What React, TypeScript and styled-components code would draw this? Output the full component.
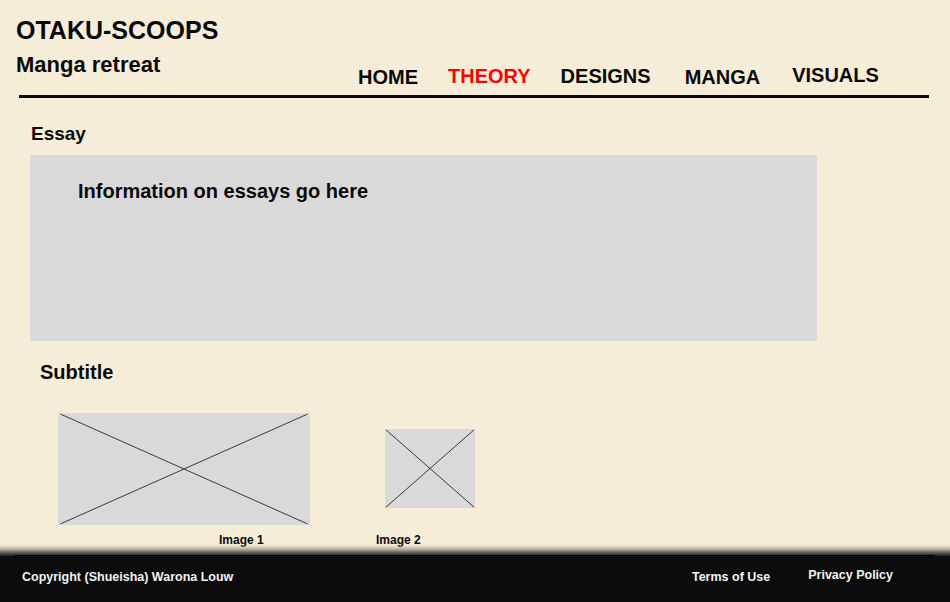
import React from "react";
import styled, { createGlobalStyle } from "styled-components";

const GlobalStyle = createGlobalStyle`
    html, body {
        margin: 0;
        padding: 0;
        background: #f5edd8;
    }
    * {
        box-sizing: border-box;
    }
`;

const Page = styled.div`
    width: 950px;
    height: 602px;
    overflow: hidden;
    display: flex;
    flex-direction: column;
    background-color: #f5edd8;
    font-family: "Liberation Sans", Arial, sans-serif;
    color: #0a0a0a;
`;

const Header = styled.header`
    flex-shrink: 0;
    display: flex;
    padding: 16px 0 0 16px;
`;

const Brand = styled.div`
    flex: 0 0 342px;
    display: flex;
    flex-direction: column;
    gap: 8px;
`;

const SiteTitle = styled.h1`
    margin: 0;
    font-size: 25px;
    line-height: 28px;
    font-weight: 700;
`;

const Tagline = styled.h2`
    margin: 0;
    font-size: 22px;
    line-height: 26px;
    font-weight: 700;
`;

const Nav = styled.nav`
    display: flex;
    gap: 30px;
    margin-top: 49px;
    height: 24px;
`;

const NavLink = styled.a<{ $active?: boolean; $extra?: number; $lift?: number }>`
    font-size: 20px;
    line-height: 24px;
    font-weight: 700;
    text-decoration: none;
    color: ${p => (p.$active ? "#ff0000" : "#0a0a0a")};
    margin-left: ${p => p.$extra || 0}px;
    margin-top: ${p => -(p.$lift || 0)}px;
`;

const Rule = styled.hr`
    flex-shrink: 0;
    border: none;
    height: 3px;
    margin: 6px 21px 0 19px;
    background-color: #0a0a0a;
`;

const Main = styled.main`
    flex: 1;
    min-height: 0;
    display: flex;
    flex-direction: column;
    padding: 25px 0 0 30px;
`;

const SectionTitle = styled.h3<{ $size: number; $indent: number }>`
    margin: 0 0 0 ${p => p.$indent}px;
    font-size: ${p => p.$size}px;
    line-height: 22px;
    font-weight: 700;
`;

const EssayBox = styled.div`
    flex-shrink: 0;
    width: 787px;
    height: 186px;
    margin-top: 10px;
    padding: 24px 0 0 48px;
    background-color: #d9d9d9;
    font-size: 20px;
    line-height: 24px;
    font-weight: 700;
`;

const SubtitleRow = styled.div`
    flex-shrink: 0;
    margin-top: 20px;
`;

const Gallery = styled.div`
    flex-shrink: 0;
    display: flex;
    align-items: flex-start;
    gap: 75px;
    margin: 30px 0 0 28px;
`;

const Figure = styled.figure<{ $offset: number }>`
    margin: ${p => p.$offset}px 0 0 0;
    display: flex;
    flex-direction: column;
`;

const Placeholder = styled.div<{ $w: number; $h: number }>`
    width: ${p => p.$w}px;
    height: ${p => p.$h}px;
    background-color: #d9d9d9;

    svg {
        display: block;
        width: 100%;
        height: 100%;
    }
`;

const Caption = styled.figcaption<{ $dx: number; $dy: number }>`
    margin: ${p => p.$dy}px 0 0 ${p => p.$dx}px;
    font-size: 12px;
    line-height: 14px;
    font-weight: 700;
    white-space: nowrap;
`;

const Footer = styled.footer`
    flex-shrink: 0;
    display: flex;
    flex-direction: column;
    background: linear-gradient(to bottom, rgba(245, 237, 216, 0) 0px, #b9b3a3 4px, #5a5750 8px, #1e1e1e 11px, #0c0c0c 12px);
    padding-top: 10px;
`;

const FooterEdge = styled.div`
    height: 1px;
    margin: 0 15px;
    background-color: #000;
`;

const FooterBar = styled.div`
    height: 46px;
    display: flex;
    align-items: center;
    padding: 0 57px 4px 22px;
    background-color: #0c0c0c;
    color: #f2f2f2;
    font-size: 12.5px;
    font-weight: 700;
`;

const Copyright = styled.span`
    flex: 1;
`;

const FooterLinks = styled.div`
    display: flex;
    gap: 38px;
`;

const FooterLink = styled.a<{ $lift?: number }>`
    color: #f2f2f2;
    text-decoration: none;
    margin-top: ${p => -(p.$lift || 0)}px;
`;

const Cross = () => (
    <svg viewBox="0 0 100 100" preserveAspectRatio="none">
        <line x1="1" y1="1" x2="99" y2="99" stroke="#3a3a3a" strokeWidth="1" vectorEffect="non-scaling-stroke" />
        <line x1="99" y1="1" x2="1" y2="99" stroke="#3a3a3a" strokeWidth="1" vectorEffect="non-scaling-stroke" />
    </svg>
);

export default function App() {
    return (
        <Page>
            <GlobalStyle />
            <Header>
                <Brand>
                    <SiteTitle>OTAKU-SCOOPS</SiteTitle>
                    <Tagline>Manga retreat</Tagline>
                </Brand>
                <Nav>
                    <NavLink href="#">HOME</NavLink>
                    <NavLink href="#" $active $lift={1}>THEORY</NavLink>
                    <NavLink href="#" $lift={1}>DESIGNS</NavLink>
                    <NavLink href="#" $extra={4}>MANGA</NavLink>
                    <NavLink href="#" $extra={2} $lift={2}>VISUALS</NavLink>
                </Nav>
            </Header>
            <Rule />
            <Main>
                <SectionTitle $size={19} $indent={1}>Essay</SectionTitle>
                <EssayBox>Information on essays go here</EssayBox>
                <SubtitleRow>
                    <SectionTitle $size={20} $indent={10}>Subtitle</SectionTitle>
                </SubtitleRow>
                <Gallery>
                    <Figure $offset={0}>
                        <Placeholder $w={252} $h={112}><Cross /></Placeholder>
                        <Caption $dx={161} $dy={8}>Image 1</Caption>
                    </Figure>
                    <Figure $offset={16}>
                        <Placeholder $w={90} $h={79}><Cross /></Placeholder>
                        <Caption $dx={-9} $dy={25}>Image 2</Caption>
                    </Figure>
                </Gallery>
            </Main>
            <Footer>
                <FooterEdge />
                <FooterBar>
                    <Copyright>Copyright (Shueisha) Warona Louw</Copyright>
                    <FooterLinks>
                        <FooterLink href="#">Terms of Use</FooterLink>
                        <FooterLink href="#" $lift={2}>Privacy Policy</FooterLink>
                    </FooterLinks>
                </FooterBar>
            </Footer>
        </Page>
    );
}
